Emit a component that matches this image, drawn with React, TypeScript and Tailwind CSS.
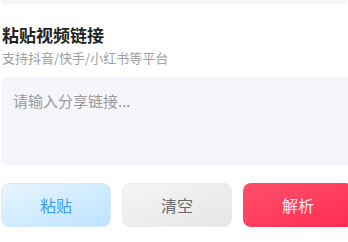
import React, { useState } from "react";

const font = { fontFamily: '"Noto Sans CJK SC", "Noto Sans", sans-serif' };

export default function App() {
	const [link, setLink] = useState("");

	return (
		<div className="w-[348px] h-[242px] overflow-hidden bg-white" style={font}>
			{/* previous card edge */}
			<div className="mx-px h-1 rounded-b bg-[#f5f6f8]" />

			<div className="w-[352px] ml-px">
				<h2 className="mt-[19px] ml-px text-[17px] leading-[24px] font-bold text-[#222]">粘贴视频链接</h2>
				<p className="mt-[2px] ml-px text-[13px] leading-[18px] text-[#a0a0a0]">支持抖音/快手/小红书等平台</p>

				<textarea
					value={link}
					onChange={(e) => setLink(e.target.value)}
					placeholder="请输入分享链接..."
					className="mt-[10px] block w-full h-[89px] resize-none rounded-md bg-[#f5f6fa] px-3 pt-[14px] pb-2 text-[15px] leading-[20px] text-[#333] placeholder:text-[#9a9a9a] outline-none"
				/>

				<div className="mt-[17px] grid grid-cols-3 gap-[11px]">
					<button className="h-[44px] rounded-lg border border-[#d6ecfd] bg-gradient-to-br from-[#e8f5ff] to-[#bde3ff] text-[16px] text-[#3d9df2]">
						粘贴
					</button>
					<button
						onClick={() => setLink("")}
						className="h-[44px] rounded-lg border border-[#ececec] bg-gradient-to-br from-[#f5f5f5] to-[#e6e6e6] text-[16px] text-[#6b6b6b]"
					>
						清空
					</button>
					<button className="h-[44px] rounded-lg bg-gradient-to-br from-[#ff4d6a] to-[#ff2b55] text-[16px] text-[#ffe9ee]">
						解析
					</button>
				</div>
			</div>
		</div>
	);
}
